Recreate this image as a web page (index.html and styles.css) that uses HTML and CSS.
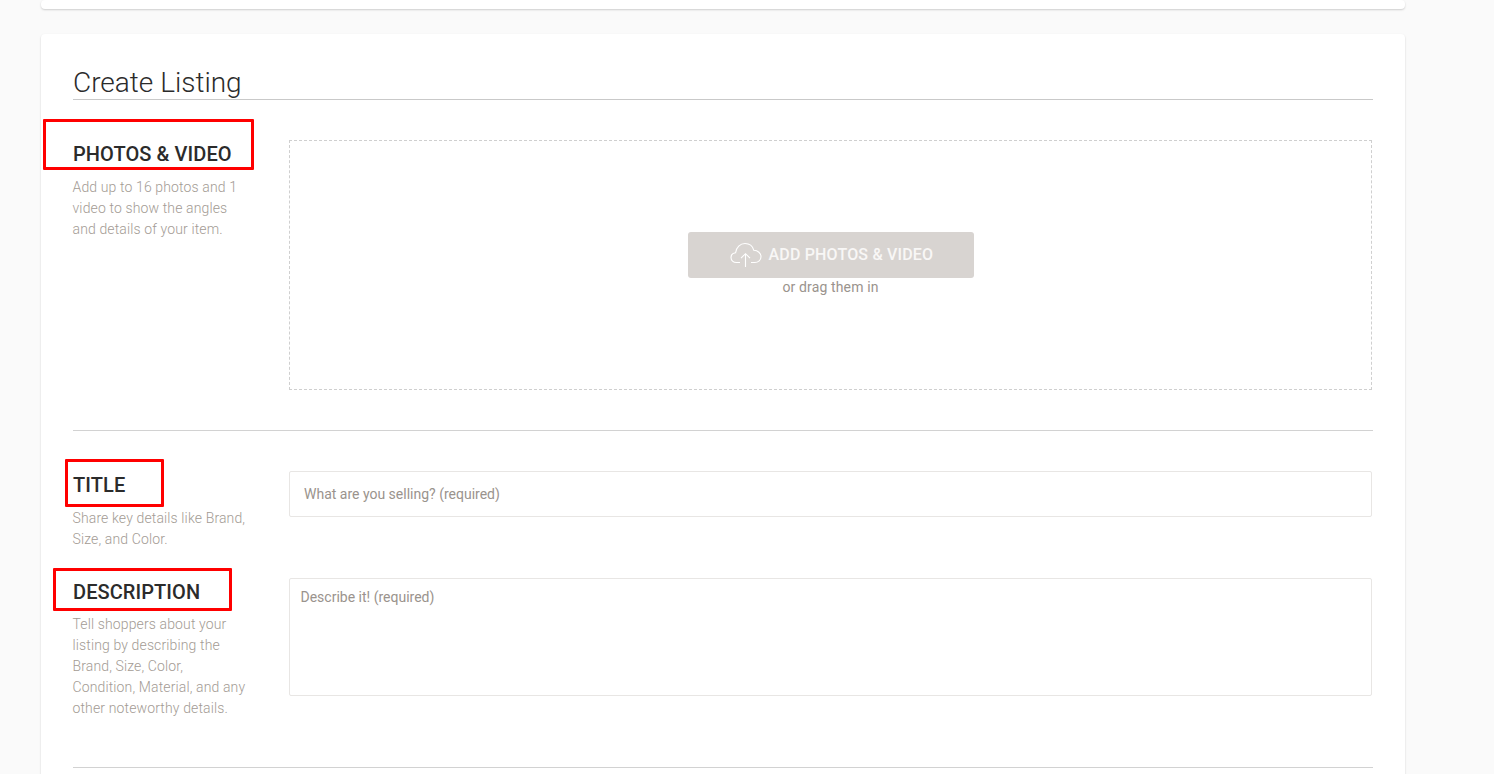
FILE: index.html
```html
<!DOCTYPE html>
<html lang="en">
<head>
    <meta charset="UTF-8">
    <title>Create Listing</title>
    <link rel="stylesheet" href="styles.css">
</head>
<body>
<div class="page">
    <div class="card top-card"></div>
    <div class="card form-card">
        <h1>Create Listing</h1>

        <div class="section photos-section">
            <div class="label-col">
                <h2 class="photos-title">PHOTOS &amp; VIDEO<span class="red-box photos-box"></span></h2>
                <p>Add up to 16 photos and 1 video to show the angles and details of your item.</p>
            </div>
            <div class="dropzone">
                <button class="upload-button">
                    <svg class="cloud-icon" viewBox="0 0 32 26" width="32" height="26" fill="none" stroke="#fff" stroke-width="1.1">
                        <path d="M10 20.5H6.5C3.2 20.5 1 18.4 1 15.6c0-2.6 1.9-4.6 4.6-4.9C6.2 5.3 10.200 1.500 15 1.500c4.300 0 7.700 2.800 8.800 6.800 4 .1 7.200 2.900 7.200 6.400 0 3.300-2.700 5.800-6.300 5.800H21"/>
                        <path d="M15.500 25V12M11 16.200l4.500-4.500 4.500 4.500"/>
                    </svg>
                    ADD PHOTOS &amp; VIDEO
                </button>
                <div class="drag-text">or drag them in</div>
            </div>
        </div>

        <hr class="divider">

        <div class="section title-section">
            <div class="label-col">
                <h2>TITLE<span class="red-box title-box"></span></h2>
                <p>Share key details like Brand, Size, and Color.</p>
            </div>
            <input class="title-input" type="text" placeholder="What are you selling? (required)">
        </div>

        <div class="section description-section">
            <div class="label-col">
                <h2>DESCRIPTION<span class="red-box description-box"></span></h2>
                <p>Tell shoppers about your listing by describing the Brand, Size, Color, Condition, Material, and any other noteworthy details.</p>
            </div>
            <textarea class="description-input" placeholder="Describe it! (required)"></textarea>
        </div>

        <hr class="divider">
    </div>
</div>
</body>
</html>
```

FILE: styles.css
```css
html, body {
    height: 100%;
    overflow: hidden;
}

body {
    font-family: Roboto, "Liberation Sans", sans-serif;
    background-color: #fafafa;
    margin: 0;
    padding: 0;
}

.page {
    width: 1364px;
    margin-left: 41px;
}

.card {
    background-color: #fff;
    border-radius: 4px;
    box-shadow: 0 1px 2px rgba(0, 0, 0, 0.18);
}

.top-card {
    height: 9px;
}

.form-card {
    margin-top: 25px;
    padding: 32px 32px 0;
    height: 900px;
}

h1 {
    margin: 0;
    height: 33px;
    font-size: 28px;
    font-weight: 300;
    line-height: 33px;
    color: #2b2b2b;
    border-bottom: 1px solid #c9c9c9;
}

.section {
    display: flex;
}

.label-col {
    width: 216px;
    flex-shrink: 0;
}

h2 {
    position: relative;
    margin: 0;
    font-size: 20px;
    font-weight: 500;
    line-height: 24px;
    letter-spacing: 0.08px;
    color: #2b2b2b;
}

.label-col p {
    width: 175px;
    margin: 10px 0 0 -0.5px;
    font-size: 14px;
    font-weight: 300;
    line-height: 21px;
    letter-spacing: 0.13px;
    color: #a39b94;
}

.red-box {
    position: absolute;
    border: 3px solid #f00;
    border-radius: 1px;
}

.photos-box {
    left: -30px;
    top: -23px;
    width: 205px;
    height: 45px;
}

.title-box {
    left: -8px;
    top: -14px;
    width: 93px;
    height: 42px;
}

.description-box {
    left: -20px;
    top: -12px;
    width: 173px;
    height: 37px;
}

.photos-section {
    padding-top: 40px;
}

.photos-section .label-col p, .title-section .label-col p {
    margin-top: 11px;
}

.photos-title {
    margin-top: 2px;
}

.dropzone {
    width: 1083px;
    height: 250px;
    box-sizing: border-box;
    border: 1px dashed #cfcfcf;
    display: flex;
    flex-direction: column;
    align-items: center;
    padding-top: 91px;
}

.upload-button {
    display: flex;
    align-items: center;
    width: 286px;
    height: 46px;
    padding: 0 0 2px 42px;
    border: none;
    border-radius: 3px;
    background-color: #d8d4d1;
    color: #f8f7f6;
    font-family: Roboto, "Liberation Sans", sans-serif;
    font-size: 16px;
    font-weight: 500;
    letter-spacing: 0.18px;
    white-space: nowrap;
}

.cloud-icon {
    margin-right: 7px;
    margin-top: 2px;
}

.drag-text {
    font-size: 14px;
    line-height: 18px;
    letter-spacing: 0.14px;
    color: #9a938d;
}

.divider {
    margin: 40px 0 0;
    border: none;
    border-top: 1px solid #d2d2d2;
}

.title-section {
    padding-top: 40px;
}

.title-section h2 {
    margin-top: 2px;
}

.title-input, .description-input {
    width: 1083px;
    box-sizing: border-box;
    border: 1px solid #e8e6e4;
    border-radius: 2px;
    font-family: Roboto, "Liberation Sans", sans-serif;
    font-size: 14px;
    outline: none;
}

.title-input {
    height: 46px;
    padding: 0 14px;
}

.title-input::placeholder, .description-input::placeholder {
    color: #9a938d;
    opacity: 1;
}

.description-section {
    margin-top: 28px;
}

.description-section h2 {
    margin-top: 2px;
}

.description-input {
    height: 118px;
    padding: 10px 10.5px;
    resize: none;
    line-height: 17px;
}

.description-section + .divider {
    margin-top: 48px;
}
```
